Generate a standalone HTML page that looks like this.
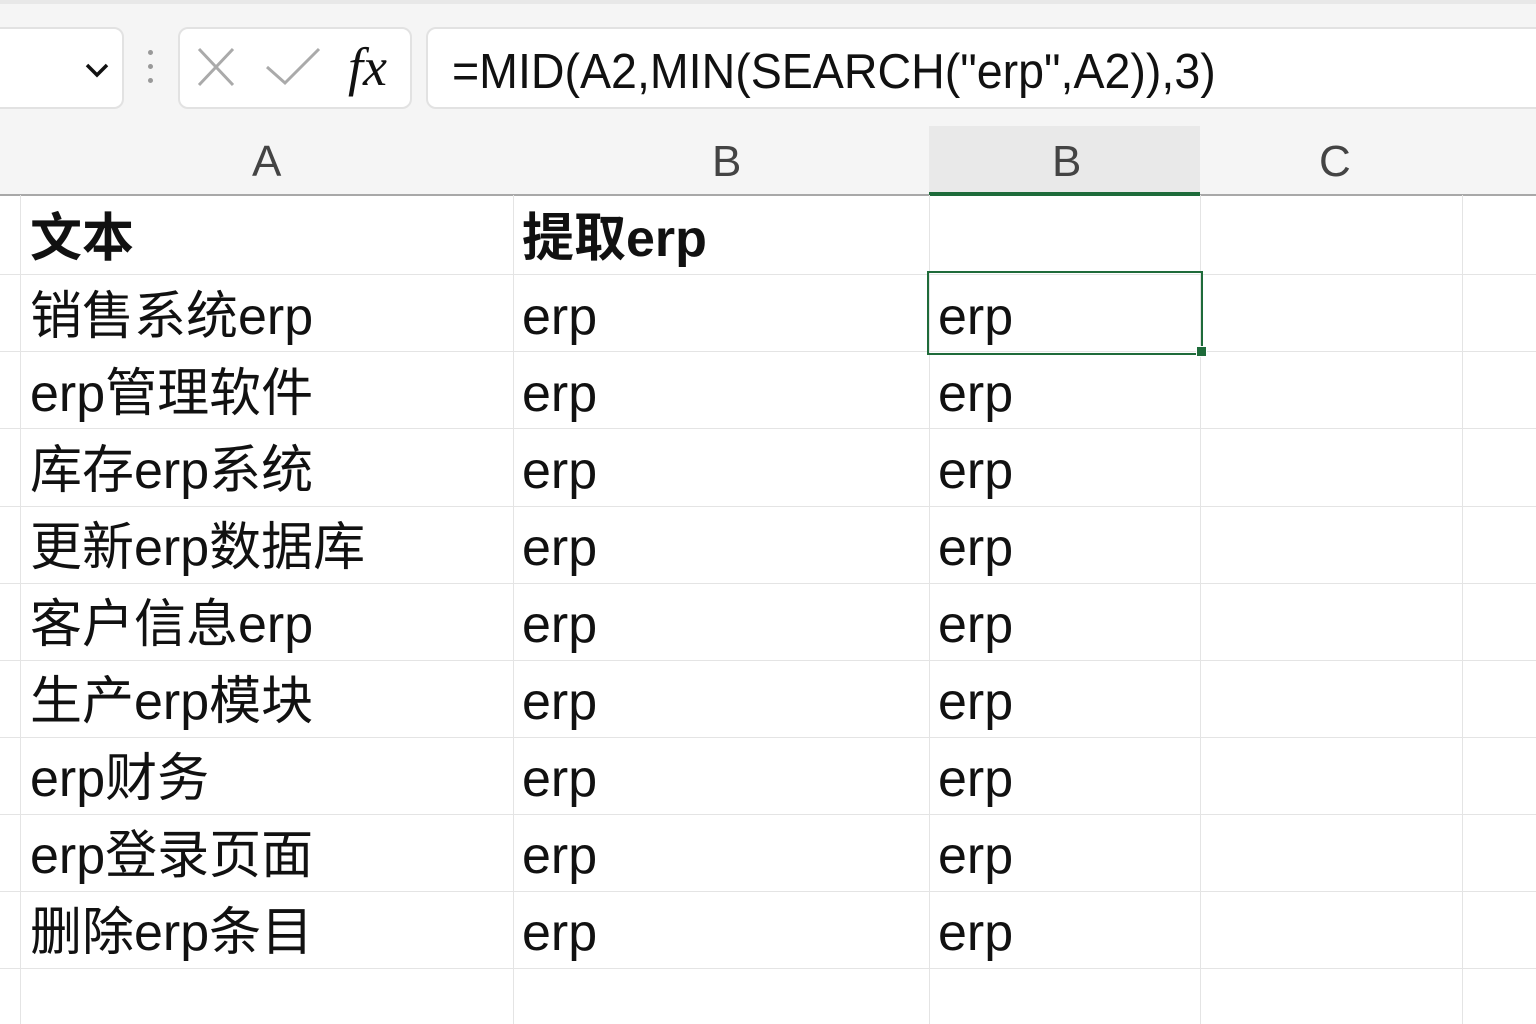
<!DOCTYPE html>
<html><head><meta charset="utf-8"><style>
body{margin:0;width:1536px;height:1024px;overflow:hidden;background:#fff;position:relative;font-family:"Liberation Sans","Noto Sans CJK SC",sans-serif;}
.a{position:absolute}
.box{position:absolute;background:#fff;border:2px solid #e2e2e2;border-radius:10px}
.t{position:absolute;font-size:52px;color:#111;white-space:nowrap;line-height:1}
.h{position:absolute;font-size:44px;color:#444;top:140px;line-height:1}
.vl{position:absolute;top:195px;height:829px;width:1px;background:#e4e4e4}
.hl{position:absolute;left:0;width:1536px;height:1px;background:#e4e4e4}
</style></head><body>
<div class="a" style="left:0;top:0;width:1536px;height:195px;background:#f5f5f5"></div>
<div class="a" style="left:0;top:0;width:1536px;height:4px;background:#e8e8e8"></div>
<div class="box" style="left:-12px;top:27px;width:132px;height:78px"></div>
<svg class="a" style="left:84px;top:60px" width="26" height="20"><path d="M3 5 L13 15 L23 5" stroke="#111" stroke-width="3.5" fill="none"/></svg>
<div class="a" style="left:148px;top:50px;width:5px;height:5px;border-radius:3px;background:#999"></div>
<div class="a" style="left:148px;top:64px;width:5px;height:5px;border-radius:3px;background:#999"></div>
<div class="a" style="left:148px;top:78px;width:5px;height:5px;border-radius:3px;background:#999"></div>
<div class="box" style="left:178px;top:27px;width:230px;height:78px"></div>
<svg class="a" style="left:195px;top:45px" width="130" height="45"><path d="M4 4 L38 40 M38 4 L4 40" stroke="#aaa" stroke-width="3" fill="none"/><path d="M72 22 L90 38 L124 4" stroke="#aaa" stroke-width="3" fill="none"/></svg>
<div class="a" style="left:348px;top:36px;font-family:'Liberation Serif',serif;font-style:italic;font-size:54px;color:#111">fx</div>
<div class="box" style="left:426px;top:27px;width:1130px;height:78px"></div>
<div class="a" style="left:452px;top:44px;font-size:49px;color:#111;white-space:nowrap;transform-origin:left;transform:scaleX(0.95)">=MID(A2,MIN(SEARCH("erp",A2)),3)</div>
<div class="a" style="left:929px;top:126px;width:271px;height:69px;background:#e9e9e9"></div>
<div class="a" style="left:0;top:194px;width:1536px;height:2px;background:#a8a8a8"></div>
<div class="a" style="left:929px;top:192px;width:271px;height:4px;background:#1e6b3a"></div>
<div class="h" style="left:252px">A</div>
<div class="h" style="left:712px">B</div>
<div class="h" style="left:1052px">B</div>
<div class="h" style="left:1319px">C</div>
<div class="vl" style="left:20px"></div><div class="vl" style="left:513px"></div><div class="vl" style="left:929px"></div><div class="vl" style="left:1200px"></div><div class="vl" style="left:1462px"></div>
<div class="hl" style="top:274px"></div><div class="hl" style="top:351px"></div><div class="hl" style="top:428px"></div><div class="hl" style="top:506px"></div><div class="hl" style="top:583px"></div><div class="hl" style="top:660px"></div><div class="hl" style="top:737px"></div><div class="hl" style="top:814px"></div><div class="hl" style="top:891px"></div><div class="hl" style="top:968px"></div>
<div class="t" style="left:30px;top:213px;font-weight:bold">文本</div>
<div class="t" style="left:522px;top:213px;font-weight:bold">提取erp</div>
<div class="t" style="left:30px;top:291px">销售系统erp</div>
<div class="t" style="left:30px;top:368px">erp管理软件</div>
<div class="t" style="left:30px;top:445px">库存erp系统</div>
<div class="t" style="left:30px;top:522px">更新erp数据库</div>
<div class="t" style="left:30px;top:599px">客户信息erp</div>
<div class="t" style="left:30px;top:676px">生产erp模块</div>
<div class="t" style="left:30px;top:753px">erp财务</div>
<div class="t" style="left:30px;top:830px">erp登录页面</div>
<div class="t" style="left:30px;top:907px">删除erp条目</div>
<div class="t" style="left:522px;top:291px">erp</div><div class="t" style="left:938px;top:291px">erp</div>
<div class="t" style="left:522px;top:368px">erp</div><div class="t" style="left:938px;top:368px">erp</div>
<div class="t" style="left:522px;top:445px">erp</div><div class="t" style="left:938px;top:445px">erp</div>
<div class="t" style="left:522px;top:522px">erp</div><div class="t" style="left:938px;top:522px">erp</div>
<div class="t" style="left:522px;top:599px">erp</div><div class="t" style="left:938px;top:599px">erp</div>
<div class="t" style="left:522px;top:676px">erp</div><div class="t" style="left:938px;top:676px">erp</div>
<div class="t" style="left:522px;top:753px">erp</div><div class="t" style="left:938px;top:753px">erp</div>
<div class="t" style="left:522px;top:830px">erp</div><div class="t" style="left:938px;top:830px">erp</div>
<div class="t" style="left:522px;top:907px">erp</div><div class="t" style="left:938px;top:907px">erp</div>
<div class="a" style="left:927px;top:271px;width:272px;height:80px;border:2px solid #1e6b3a"></div>
<div class="a" style="left:1196px;top:346px;width:9px;height:9px;background:#1e6b3a;border:1px solid #fff"></div>
</body></html>
